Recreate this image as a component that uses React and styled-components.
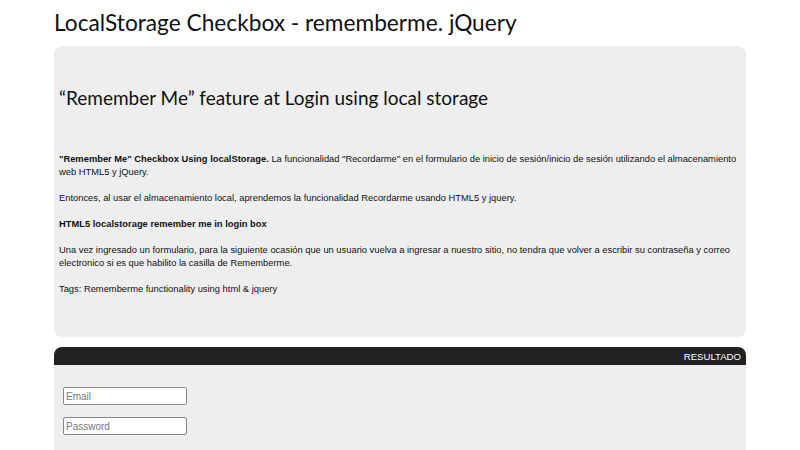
import React from "react";
import styled, { createGlobalStyle } from "styled-components";

const GlobalStyle = createGlobalStyle`
  html, body {
    margin: 0;
    padding: 0;
    background: #fff;
    color: #000;
  }
`;

const Page = styled.div`
  width: 692px;
  margin: 0 auto;
  padding-top: 7px;
`;

const Title = styled.h1`
  margin: 0 0 8px;
  font-family: Lato, "Open Sans", sans-serif;
  font-weight: 400;
  font-size: 22.7px;
  line-height: 31px;
  color: #111;
`;

const Panel = styled.section`
  background: #eeeeee;
  border-radius: 8px;
  padding: 37px 5px 28px;
`;

const Heading = styled.h2`
  margin: 0 0 40px;
  font-family: Lato, "Open Sans", sans-serif;
  font-weight: 400;
  font-size: 19px;
  line-height: 30px;
  color: #111;
`;

const Text = styled.p`
  margin: 0 0 13px;
  font-family: "Liberation Sans", Arial, sans-serif;
  font-size: 9.35px;
  line-height: 13px;
  color: #111;
`;

const ResultBar = styled.div`
  margin-top: 10px;
  background: #222;
  border-radius: 8px 8px 0 0;
  height: 18px;
  display: flex;
  align-items: center;
  justify-content: flex-end;
  padding: 0 5px;
  font-family: "Liberation Sans", Arial, sans-serif;
  font-size: 9.6px;
  color: #fff;
`;

const ResultBody = styled.div`
  background: #eeeeee;
  padding: 22px 9px 20px;
  display: flex;
  flex-direction: column;
  gap: 12px;
`;

const Input = styled.input`
  box-sizing: border-box;
  width: 124px;
  height: 18px;
  padding: 0 2px;
  border: 1px solid #888;
  border-radius: 2px;
  background: #fff;
  font-family: "Liberation Sans", Arial, sans-serif;
  font-size: 10px;
  &::placeholder {
    color: #777;
  }
`;

export default function App() {
  return (
    <>
      <GlobalStyle />
      <Page>
        <Title>LocalStorage Checkbox - rememberme. jQuery</Title>
        <Panel>
          <Heading>“Remember Me” feature at Login using local storage</Heading>
          <Text>
            <b>"Remember Me" Checkbox Using localStorage.</b> La funcionalidad
            "Recordarme" en el formulario de inicio de sesión/inicio de sesión
            utilizando el almacenamiento web HTML5 y jQuery.
          </Text>
          <Text>
            Entonces, al usar el almacenamiento local, aprendemos la
            funcionalidad Recordarme usando HTML5 y jquery.
          </Text>
          <Text>
            <b>HTML5 localstorage remember me in login box</b>
          </Text>
          <Text>
            Una vez ingresado un formulario, para la siguiente ocasión que un
            usuario vuelva a ingresar a nuestro sitio, no tendra que volver a
            escribir su contraseña y correo electronico si es que habilito la
            casilla de Rememberme.
          </Text>
          <Text>Tags: Rememberme functionality using html &amp; jquery</Text>
        </Panel>
        <ResultBar>RESULTADO</ResultBar>
        <ResultBody>
          <Input type="text" placeholder="Email" />
          <Input type="password" placeholder="Password" />
        </ResultBody>
      </Page>
    </>
  );
}
